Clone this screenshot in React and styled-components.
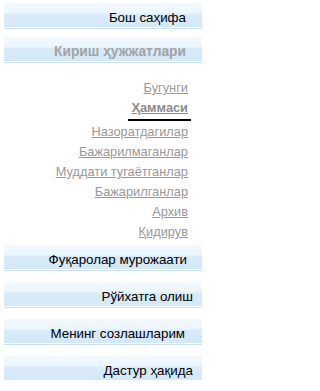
import React from "react";
import styled, { createGlobalStyle } from "styled-components";

const GlobalStyle = createGlobalStyle`
  html, body {
    margin: 0;
    padding: 0;
    background: #fff;
  }
  body {
    font-family: "Liberation Sans", Arial, sans-serif;
  }
`;

const links = [
  { title: "Бугунги" },
  { title: "Ҳаммаси", active: true },
  { title: "Назоратдагилар" },
  { title: "Бажарилмаганлар" },
  { title: "Муддати тугаётганлар" },
  { title: "Бажарилганлар" },
  { title: "Архив" },
  { title: "Қидирув" },
];

const bottomMenu = [
  { title: "Фуқаролар мурожаати", inset: 15 },
  { title: "Рўйхатга олиш", inset: 9 },
  { title: "Менинг созлашларим", inset: 17 },
  { title: "Дастур ҳақида", inset: 9 },
];

const Menu = () => {
  return (
    <>
      <GlobalStyle />
      <Wrapper>
        <Bar inset={16}>Бош саҳифа</Bar>
        <Bar inset={16} muted top={9}>Кириш ҳужжатлари</Bar>
        <LinkList>
          {links.map((link, i) => (
            <LinkItem key={i} active={link.active}>
              <MenuLink href="#" active={link.active}>{link.title}</MenuLink>
            </LinkItem>
          ))}
        </LinkList>
        {bottomMenu.map((item, i) => (
          <Bar key={i} inset={item.inset} top={i === 0 ? 4 : 12}>
            {item.title}
          </Bar>
        ))}
      </Wrapper>
    </>
  );
};

export const Wrapper = styled.div`
  width: 205px;
  box-sizing: border-box;
  padding: 3px 3px 0 4px;
  display: flex;
  flex-direction: column;
`;

export const Bar = styled.div`
  height: 25px;
  margin-top: ${(props) => (props.top ? props.top : 0)}px;
  box-sizing: border-box;
  display: flex;
  align-items: flex-end;
  justify-content: flex-end;
  padding: 0 ${(props) => props.inset}px 1px 0;
  background: linear-gradient(
    to bottom,
    #f3f9fe 0%,
    #ebf5fc 42%,
    #d8ebf9 46%,
    #d3e8f8 100%
  );
  border-bottom: 1px solid #fff;
  box-shadow: 0 1px 0 #c8e1f5;
  font-size: ${(props) => (props.muted ? 13.8 : 13.33)}px;
  line-height: 16px;
  font-weight: ${(props) => (props.muted ? "bold" : "normal")};
  color: ${(props) => (props.muted ? "#a3a3a3" : "#000")};
  white-space: nowrap;
`;

export const LinkList = styled.div`
  display: flex;
  flex-direction: column;
  align-items: flex-end;
  padding: 15px 14px 0 0;
`;

export const LinkItem = styled.div`
  height: ${(props) => (props.active ? 24 : 20)}px;
  box-sizing: border-box;
  line-height: 20px;
  padding: 0 ${(props) => (props.active ? 3 : 0)}px;
  margin-right: ${(props) => (props.active ? -3 : 0)}px;
  border-bottom: ${(props) => (props.active ? "2px solid #000" : "none")};
`;

export const MenuLink = styled.a`
  font-size: 12.8px;
  font-weight: ${(props) => (props.active ? "bold" : "normal")};
  color: ${(props) => (props.active ? "#8c8c8c" : "#999")};
  text-decoration: underline;
  white-space: nowrap;
`;

export default Menu;
